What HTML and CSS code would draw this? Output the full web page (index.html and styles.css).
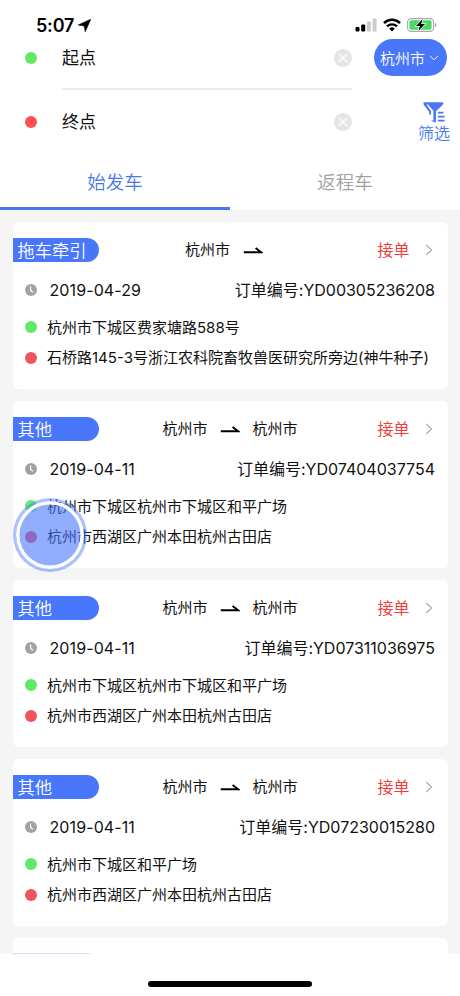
FILE: index.html
```html
<!DOCTYPE html>
<html lang="zh-CN">

<head>
    <meta charset="utf-8">
    <title>接单</title>
    <meta name="viewport" content="width=device-width, initial-scale=1">
    <link rel="stylesheet" href="styles.css">
</head>

<body>
    <!-- shared icons -->
    <svg class="sprite" width="0" height="0">
        <symbol id="clock" viewBox="0 0 12 12">
            <circle cx="6" cy="6" r="6" fill="#a2a2a2"/>
            <path d="M5.6 2.5V6.5L8 8.2" fill="none" stroke="#fff" stroke-width="1.2"/>
        </symbol>
        <symbol id="arrow" viewBox="0 0 20 10">
            <path d="M0.8 6.3H18.2L12.6 2" fill="none" stroke="#000" stroke-width="2"/>
        </symbol>
        <symbol id="chevron" viewBox="0 0 8 12">
            <path d="M1.2 1L6.6 6L1.2 11" fill="none" stroke="#777" stroke-width="1"/>
        </symbol>
        <symbol id="clear" viewBox="0 0 18 18">
            <circle cx="9" cy="9" r="9" fill="#e5e5e5"/>
            <path d="M4.8 4.8L13.2 13.2M13.2 4.8L4.8 13.2" stroke="#fff" stroke-width="1.2"/>
        </symbol>
    </svg>

    <header class="status-bar">
        <div class="time">
            <span>5:07</span>
            <svg width="13" height="13" viewBox="0 0 13 13"><path d="M12.8 0.2L7.2 12.8L6.2 7L0.2 6Z" fill="#000" stroke="#000" stroke-width="0.6"/></svg>
        </div>
        <div class="status-icons">
            <svg width="22" height="14" viewBox="0 0 22 14">
                <rect x="0.5" y="9" width="4" height="4.5" rx="1" fill="#000"/>
                <rect x="6.2" y="6.5" width="4" height="7" rx="1" fill="#000"/>
                <rect x="11.9" y="3.5" width="4" height="10" rx="1" fill="#ccc"/>
                <rect x="17.6" y="0.5" width="4" height="13" rx="1" fill="#ccc"/>
            </svg>
            <svg width="18" height="14" viewBox="0 0 18 14">
                <path d="M1 5.1A11.4 11.4 0 0 1 17 5.1" fill="none" stroke="#000" stroke-width="2.5"/>
                <path d="M4 8.3A7.2 7.2 0 0 1 14 8.3" fill="none" stroke="#000" stroke-width="2.3"/>
                <path d="M9 13.6L6.2 10.7A4 4 0 0 1 11.8 10.7Z" fill="#000"/>
            </svg>
            <svg width="30" height="14" viewBox="0 0 30 14">
                <rect x="0.6" y="0.6" width="26" height="12.8" rx="3.6" fill="#fff" stroke="#aaa" stroke-width="1.1"/>
                <rect x="2.4" y="2.3" width="22.2" height="9.4" rx="2" fill="#4bd964"/>
                <path d="M28 4.8Q30.6 7 28 9.2Z" fill="#999"/>
                <path d="M15.6 1L9 8H12.8L11.4 13L18 6H14.2Z" fill="#000" stroke="#fff" stroke-width="1.4" paint-order="stroke"/>
            </svg>
        </div>
    </header>

    <section class="search">
        <div class="fields">
            <div class="field">
                <span class="dot green"></span>
                <span class="field-text">起点</span>
                <svg class="clear" width="18" height="18"><use href="#clear"/></svg>
            </div>
            <div class="field">
                <span class="dot red"></span>
                <span class="field-text">终点</span>
                <svg class="clear" width="18" height="18"><use href="#clear"/></svg>
            </div>
        </div>
        <div class="side">
            <button class="city" type="button">
                杭州市
                <svg width="10" height="6" viewBox="0 0 10 6"><path d="M0.8 0.8L5 4.8L9.2 0.8" fill="none" stroke="#fff" stroke-width="0.9"/></svg>
            </button>
            <div class="filter">
                <svg width="22" height="21" viewBox="0 0 22 21">
                    <path d="M1.2 0.3H19.6Q21.2 0.8 20 2.4L13 9.3V19.3Q12.8 20.8 11.2 20.3L8 18.6H10.4V8.6L1 2.6Q-0.4 0.8 1.2 0.3Z" fill="#4977f6"/>
                    <path d="M1.3 2L7.2 9.3V12.5" fill="none" stroke="#4977f6" stroke-width="2" stroke-linejoin="round"/>
                    <path d="M4.2 2.6L9.2 8.4V12.8" fill="none" stroke="#fff" stroke-width="1.3"/>
                    <path d="M14.8 10.6H20.4M14.8 14.6H21.6M14.8 18.6H21.6" stroke="#4977f6" stroke-width="1.8"/>
                </svg>
                <span>筛选</span>
            </div>
        </div>
    </section>

    <nav class="tabs">
        <a class="tab active">始发车</a>
        <a class="tab">返程车</a>
    </nav>

    <main class="list">
        <article class="card">
            <div class="card-head">
                <span class="type">拖车牵引</span>
                <div class="route one-way">
                    <span class="place">杭州市</span>
                    <svg width="20" height="10"><use href="#arrow"/></svg>
                </div>
                <div class="take">接单 <svg width="8" height="12"><use href="#chevron"/></svg></div>
            </div>
            <div class="meta">
                <svg width="12" height="12"><use href="#clock"/></svg>
                <span class="date">2019-04-29</span>
                <span class="order-no">订单编号:YD00305236208</span>
            </div>
            <div class="address"><span class="dot green"></span>杭州市下城区费家塘路588号</div>
            <div class="address"><span class="dot red"></span>石桥路145-3号浙江农科院畜牧兽医研究所旁边(神牛种子)</div>
        </article>

        <article class="card">
            <div class="card-head">
                <span class="type">其他</span>
                <div class="route">
                    <span class="place">杭州市</span>
                    <svg width="20" height="10"><use href="#arrow"/></svg>
                    <span class="place">杭州市</span>
                </div>
                <div class="take">接单 <svg width="8" height="12"><use href="#chevron"/></svg></div>
            </div>
            <div class="meta">
                <svg width="12" height="12"><use href="#clock"/></svg>
                <span class="date">2019-04-11</span>
                <span class="order-no">订单编号:YD07404037754</span>
            </div>
            <div class="address"><span class="dot green"></span>杭州市下城区杭州市下城区和平广场</div>
            <div class="address"><span class="dot red"></span>杭州市西湖区广州本田杭州古田店</div>
            <span class="touch"></span>
        </article>

        <article class="card">
            <div class="card-head">
                <span class="type">其他</span>
                <div class="route">
                    <span class="place">杭州市</span>
                    <svg width="20" height="10"><use href="#arrow"/></svg>
                    <span class="place">杭州市</span>
                </div>
                <div class="take">接单 <svg width="8" height="12"><use href="#chevron"/></svg></div>
            </div>
            <div class="meta">
                <svg width="12" height="12"><use href="#clock"/></svg>
                <span class="date">2019-04-11</span>
                <span class="order-no">订单编号:YD07311036975</span>
            </div>
            <div class="address"><span class="dot green"></span>杭州市下城区杭州市下城区和平广场</div>
            <div class="address"><span class="dot red"></span>杭州市西湖区广州本田杭州古田店</div>
        </article>

        <article class="card">
            <div class="card-head">
                <span class="type">其他</span>
                <div class="route">
                    <span class="place">杭州市</span>
                    <svg width="20" height="10"><use href="#arrow"/></svg>
                    <span class="place">杭州市</span>
                </div>
                <div class="take">接单 <svg width="8" height="12"><use href="#chevron"/></svg></div>
            </div>
            <div class="meta">
                <svg width="12" height="12"><use href="#clock"/></svg>
                <span class="date">2019-04-11</span>
                <span class="order-no">订单编号:YD07230015280</span>
            </div>
            <div class="address"><span class="dot green"></span>杭州市下城区和平广场</div>
            <div class="address"><span class="dot red"></span>杭州市西湖区广州本田杭州古田店</div>
        </article>

        <article class="card next">
            <div class="card-head"><span class="type"></span></div>
        </article>
    </main>

    <footer class="home">
        <span class="home-bar"></span>
    </footer>
</body>

</html>
```
FILE: styles.css
```css
* {
    box-sizing: border-box;
}

body {
    margin: 0;
    height: 996px;
    display: flex;
    flex-direction: column;
    overflow: hidden;
    background-color: #fff;
    color: #111;
    font-family: Inter, "Noto Sans CJK SC", sans-serif;
    font-size: 15px;
}

svg {
    display: block;
    flex: none;
}

.sprite {
    position: absolute;
}

/* status bar */
.status-bar {
    height: 39px;
    padding: 11px 23px 0 36px;
    display: flex;
    justify-content: space-between;
    color: #000;
}

.time {
    display: flex;
    align-items: center;
    gap: 4px;
    height: 28px;
    font-size: 18px;
    font-weight: 600;
    letter-spacing: -0.2px;
}

.status-icons {
    display: flex;
    align-items: center;
    gap: 6px;
    height: 28px;
}

/* start and end point */
.search {
    height: 114px;
    display: flex;
    justify-content: space-between;
    padding: 0 9px 0 25px;
}

.fields {
    width: 327px;
}

.field {
    display: grid;
    grid-template-columns: 37px 1fr 18px;
    align-items: center;
    height: 64px;
    padding-bottom: 27px;
    font-size: 17px;
    line-height: 36px;
    background: linear-gradient(#ebebeb, #ebebeb) 37px 49px / 290px 2px no-repeat;
}

.field + .field {
    background: none;
    padding-bottom: 0;
    height: 38px;
}

.dot {
    width: 12px;
    height: 12px;
    border-radius: 50%;
    flex: none;
}

.green {
    background-color: #5fea66;
}

.red {
    background-color: #ff4f52;
}

.side {
    display: flex;
    flex-direction: column;
    align-items: flex-end;
}

.city {
    display: flex;
    align-items: center;
    justify-content: center;
    gap: 4px;
    width: 73px;
    height: 37px;
    margin-right: 4px;
    padding: 0 2px 0 0;
    border: none;
    border-radius: 19px;
    background-color: #4977fb;
    color: #fff;
    font-family: inherit;
    font-size: 15px;
    font-weight: 350;
    white-space: nowrap;
}

.filter {
    display: flex;
    flex-direction: column;
    align-items: center;
    margin: 26px 1px 0 0;
    color: #4977f6;
    font-size: 16px;
    font-weight: 350;
    line-height: 20px;
}

/* tabs */
.tabs {
    display: flex;
    height: 57px;
}

.tab {
    width: 50%;
    border-bottom: 3px solid transparent;
    text-align: center;
    font-size: 18.5px;
    font-weight: 350;
    line-height: 58px;
    color: #a0a0a0;
}

.active {
    color: #4977e8;
    border-bottom-color: #4977e8;
}

/* orders */
.list {
    height: 744px;
    overflow: hidden;
    padding: 12px 12.5px 0;
    background-color: #f5f5f5;
}

.card {
    position: relative;
    height: 167px;
    margin-bottom: 12px;
    padding-top: 16px;
    background-color: #fff;
    border-radius: 6px;
}

.card-head {
    display: grid;
    grid-template-columns: 1fr auto 1fr;
    align-items: center;
    height: 24px;
}

.type {
    width: 86px;
    height: 24px;
    padding-left: 5px;
    border-radius: 0 12px 12px 0;
    background-color: #4977fb;
    color: #fff;
    font-size: 17.3px;
    font-weight: 350;
    line-height: 25px;
}

.next .type {
    background-color: #d5dcf8;
    margin-top: -2px;
}

.route {
    display: flex;
    align-items: center;
    gap: 12.5px;
    width: 135px;
    height: 22px;
    line-height: 22px;
}

.route svg {
    margin-top: 1px;
}

.one-way {
    width: 90px;
}

.place {
    height: 22px;
    white-space: nowrap;
}

.take {
    display: flex;
    align-items: center;
    justify-content: flex-end;
    gap: 15px;
    height: 24px;
    padding-right: 15px;
    color: #f23d3d;
    font-size: 16px;
    line-height: 22px;
}

.meta {
    display: flex;
    align-items: center;
    height: 24px;
    margin-top: 16px;
    padding: 0 12.5px;
    font-size: 16px;
}

.date {
    margin-left: 12.5px;
    letter-spacing: 0.1px;
}

.order-no {
    height: 24px;
    margin-left: auto;
    line-height: 25px;
}

.meta + .address {
    margin-top: 10px;
}

.address {
    display: flex;
    align-items: center;
    gap: 10px;
    height: 30.5px;
    padding-left: 12.5px;
    line-height: 21px;
    white-space: nowrap;
}

.address .red {
    background-color: #f0555d;
}

/* finger mark over the pressed card */
.touch {
    position: absolute;
    left: 0;
    top: 96.5px;
    width: 74px;
    height: 74px;
    border: 3px solid rgba(73, 119, 251, 0.45);
    border-radius: 50%;
    background-color: rgba(73, 119, 251, 0.6);
    background-clip: padding-box;
    box-shadow: inset 0 0 0 3.5px #fff;
}

.home {
    flex: 1;
    display: flex;
    justify-content: center;
    padding-top: 27px;
}

.home-bar {
    width: 164px;
    height: 6px;
    border-radius: 3px;
    background-color: #000;
}
```
